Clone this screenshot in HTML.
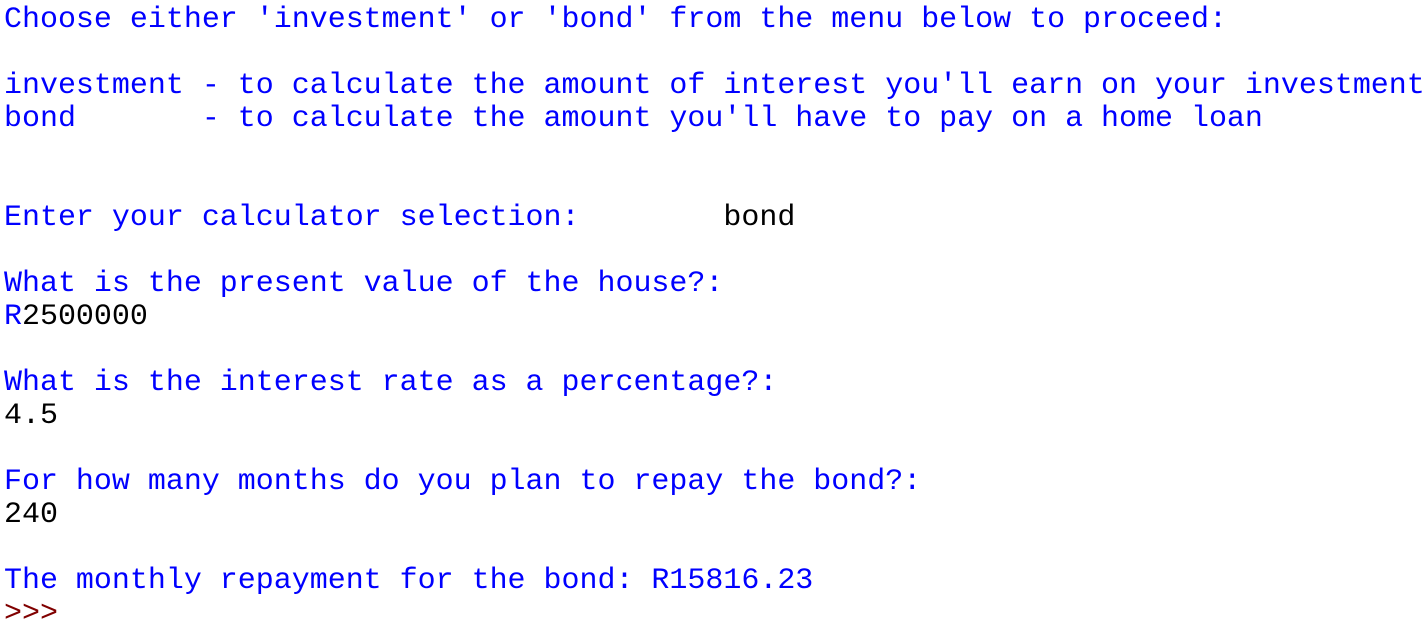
<!DOCTYPE html>
<html><head><meta charset="utf-8"><style>
html,body{margin:0;padding:0;background:#fff;width:1426px;height:622px;overflow:hidden}
pre{margin:0;padding:4px 0 0 4px;font-family:"Liberation Mono","Courier New",monospace;font-size:29.98px;line-height:33px;color:#0000ff;white-space:pre}
.i{color:#000}.p{color:#800000}
</style></head><body><pre>Choose either 'investment' or 'bond' from the menu below to proceed:

investment - to calculate the amount of interest you'll earn on your investment
bond       - to calculate the amount you'll have to pay on a home loan


Enter your calculator selection:        <span class="i">bond</span>

What is the present value of the house?:
R<span class="i">2500000</span>

What is the interest rate as a percentage?:
<span class="i">4.5</span>

For how many months do you plan to repay the bond?:
<span class="i">240</span>

The monthly repayment for the bond: R15816.23
<span class="p">&gt;&gt;&gt;</span></pre></body></html>
